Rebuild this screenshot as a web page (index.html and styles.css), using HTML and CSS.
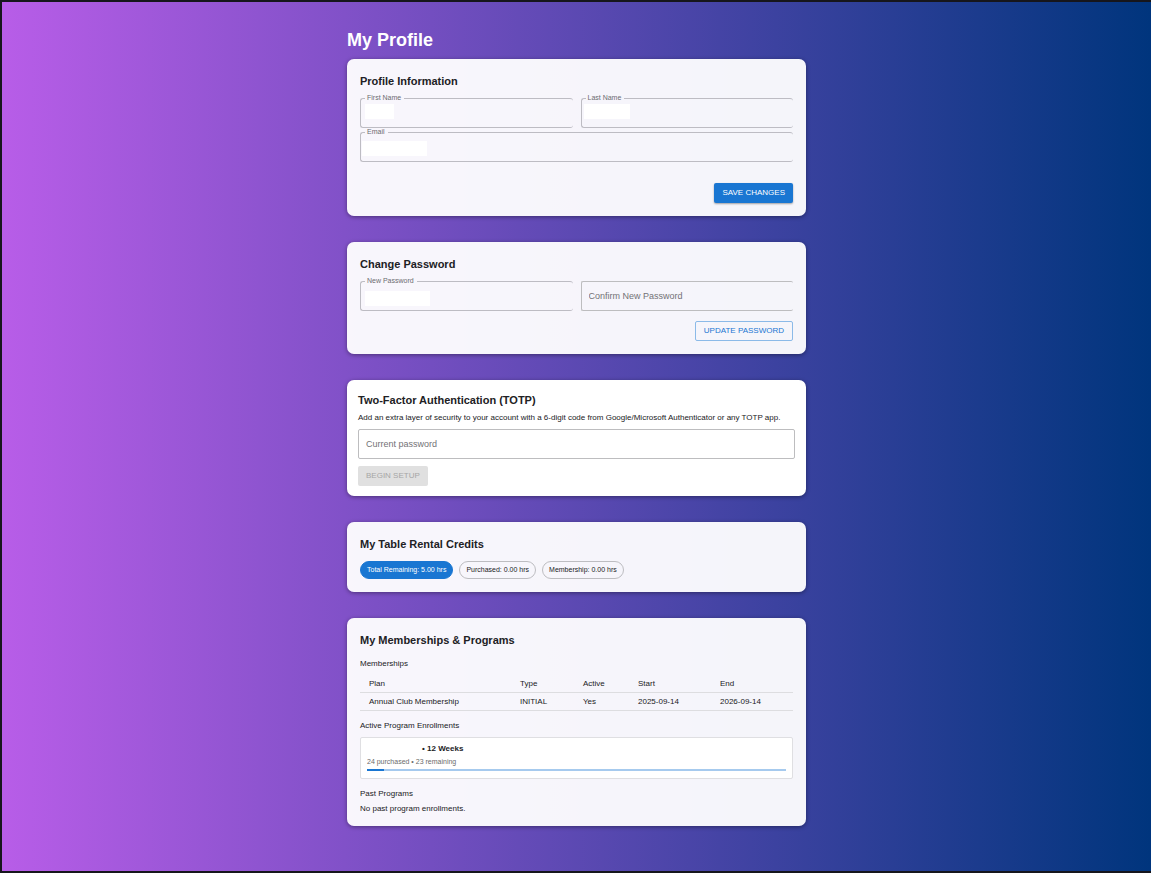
FILE: index.html
```html
<!DOCTYPE html>
<html lang="en">
<head>
<meta charset="utf-8">
<meta name="viewport" content="width=device-width, initial-scale=1">
<title>My Profile</title>
<link rel="stylesheet" href="styles.css">
</head>
<body>
<main class="page">
  <h1 class="page-title">My Profile</h1>

  <form class="card">
    <h2 class="card-title">Profile Information</h2>
    <div class="field-grid">
      <fieldset class="field">
        <legend><label for="first-name">First Name</label></legend>
        <input class="value value-first" id="first-name" type="text">
      </fieldset>
      <fieldset class="field">
        <legend><label for="last-name">Last Name</label></legend>
        <input class="value value-last" id="last-name" type="text">
      </fieldset>
      <fieldset class="field field-wide">
        <legend><label for="email">Email</label></legend>
        <input class="value value-email" id="email" type="email">
      </fieldset>
    </div>
    <div class="actions actions-save">
      <button class="btn btn-primary" type="button">SAVE CHANGES</button>
    </div>
  </form>

  <form class="card">
    <h2 class="card-title">Change Password</h2>
    <div class="field-grid">
      <fieldset class="field">
        <legend><label for="new-password">New Password</label></legend>
        <input class="value value-password" id="new-password" type="password">
      </fieldset>
      <input class="box-input box-open" type="password" placeholder="Confirm New Password" aria-label="Confirm New Password">
    </div>
    <div class="actions">
      <button class="btn btn-outline" type="button">UPDATE PASSWORD</button>
    </div>
  </form>

  <form class="card card-solid">
    <h2 class="card-title">Two-Factor Authentication (TOTP)</h2>
    <p class="text description">Add an extra layer of security to your account with a 6-digit code from Google/Microsoft Authenticator or any TOTP app.</p>
    <input class="box-input" type="password" placeholder="Current password" aria-label="Current password">
    <button class="btn btn-setup" type="button" disabled>BEGIN SETUP</button>
  </form>

  <section class="card">
    <h2 class="card-title">My Table Rental Credits</h2>
    <div class="chips">
      <span class="chip chip-filled">Total Remaining: 5.00 hrs</span>
      <span class="chip">Purchased: 0.00 hrs</span>
      <span class="chip">Membership: 0.00 hrs</span>
    </div>
  </section>

  <section class="card card-programs">
    <h2 class="card-title">My Memberships &amp; Programs</h2>
    <h3 class="text section-title">Memberships</h3>
    <table class="table">
      <thead>
        <tr><th>Plan</th><th class="col-type">Type</th><th class="col-active">Active</th><th class="col-date">Start</th><th class="col-date">End</th></tr>
      </thead>
      <tbody>
        <tr><td>Annual Club Membership</td><td>INITIAL</td><td>Yes</td><td>2025-09-14</td><td>2026-09-14</td></tr>
      </tbody>
    </table>
    <h3 class="text section-title">Active Program Enrollments</h3>
    <div class="program">
      <div class="program-name">• 12 Weeks</div>
      <div class="program-count">24 purchased • 23 remaining</div>
      <div class="progress"><div class="progress-fill" style="width:4%"></div></div>
    </div>
    <h3 class="text section-title">Past Programs</h3>
    <p class="text past-empty">No past program enrollments.</p>
  </section>
</main>
</body>
</html>
```

FILE: styles.css
```css
* {
  box-sizing: border-box;
}

body {
  margin: 0;
  min-height: 100vh;
  border: 2px solid #16161c;
  border-right: 0;
  background: linear-gradient(90deg, #b85de8, #00357d);
  background-origin: border-box;
  font-family: "Liberation Sans", Arial, Helvetica, sans-serif;
  color: #212124;
}

h1, h2, h3, p {
  margin: 0;
}

input, button {
  font-family: inherit;
}

.page {
  max-width: 459px;
  margin: 0 auto;
  padding: 26px 0 43px;
}

.page-title {
  margin-bottom: 7px;
  color: #fff;
  font-size: 18px;
  line-height: 24px;
}

.card {
  margin-bottom: 26px;
  padding: 13px;
  border-radius: 7px;
  background: rgba(255, 255, 255, 0.95);
  box-shadow: 0 1px 4px rgba(0, 0, 0, 0.4);
}

.card:last-child {
  margin-bottom: 0;
}

.card-solid {
  padding: 11px 11px 10px;
  background: #fff;
}

.card-programs {
  padding-bottom: 11px;
}

.card-title {
  font-size: 11px;
  line-height: 18px;
}

.text {
  font-size: 8px;
  font-weight: 400;
  line-height: 12px;
}

.field-grid {
  display: grid;
  grid-template-columns: 1fr 1fr;
  column-gap: 8px;
  align-items: end;
  margin-top: 4px;
}

.field {
  min-width: 0;
  height: 34px;
  margin: 0;
  padding: 0 0 0 4px;
  border: 1px solid #bdbcc3;
  border-right: 0;
  border-radius: 3px;
}

.field-wide {
  grid-column: 1 / -1;
}

.field legend {
  padding: 0 3px 0 2px;
  color: #6c6b70;
  font-size: 7px;
  line-height: 8px;
}

.field label {
  display: block;
}

.value {
  display: block;
  height: 15px;
  margin-top: 2px;
  padding: 0;
  border: 0;
  background: #fff;
  font-size: 9px;
}

.value-first {
  width: 29px;
}

.value-last {
  width: 46px;
  margin-left: -2px;
}

.value-email {
  width: 65px;
  margin-top: 5px;
  margin-left: -3px;
}

.value-password {
  width: 65px;
  margin-top: 6px;
}

.box-input {
  display: block;
  width: 100%;
  height: 30px;
  padding: 0 7px;
  border: 1px solid #bdbdbf;
  border-radius: 2px;
  background: transparent;
  font-size: 9px;
}

.box-open {
  border-right: 0;
}

.box-input::placeholder {
  color: #737276;
  opacity: 1;
}

.actions {
  display: flex;
  justify-content: flex-end;
  margin-top: 10px;
}

.actions-save {
  margin-top: 21px;
}

.btn {
  height: 20px;
  padding: 0 8px;
  border: 0;
  border-radius: 2px;
  font-size: 8px;
  line-height: 18px;
}

.btn-primary {
  background: #1976d2;
  box-shadow: 0 1px 2px rgba(0, 0, 0, 0.35);
  color: #fff;
}

.btn-outline {
  border: 1px solid #8bbae8;
  background: transparent;
  color: #1976d2;
}

.btn-setup {
  display: block;
  margin-top: 7px;
  background: #e0e0e0;
  color: #a6a6a6;
}

.description {
  margin: 3px 0 5px;
}

.chips {
  display: flex;
  flex-wrap: wrap;
  gap: 6px;
  margin-top: 8px;
}

.chip {
  padding: 0 6px;
  border: 1px solid #bdbdc1;
  border-radius: 9px;
  font-size: 7px;
  line-height: 16px;
}

.chip-filled {
  border-color: #1976d2;
  background: #1976d2;
  color: #fff;
}

.section-title {
  margin-top: 9px;
}

.table {
  width: 100%;
  margin-top: 5px;
  border-collapse: separate;
  border-spacing: 0;
  table-layout: fixed;
  font-size: 8px;
  line-height: 17px;
}

.table th,
.table td {
  padding: 0 0 0 9px;
  border-bottom: 1px solid #dddde0;
  font-weight: 400;
  text-align: left;
}

.col-type {
  width: 63px;
}

.col-active {
  width: 55px;
}

.col-date {
  width: 82px;
}

.program {
  margin-top: 5px;
  padding: 5px 6px 7px;
  border: 1px solid #dfdfe2;
  border-radius: 2px;
  background: #fff;
}

.program-name {
  padding-left: 55px;
  font-size: 8px;
  font-weight: 700;
  line-height: 12px;
}

.program-count {
  color: #6b6b6b;
  font-size: 7px;
  line-height: 14px;
}

.progress {
  height: 2px;
  background: #a6caee;
}

.progress-fill {
  height: 100%;
  background: #1976d2;
}

.past-empty {
  margin-top: 3px;
}
```
